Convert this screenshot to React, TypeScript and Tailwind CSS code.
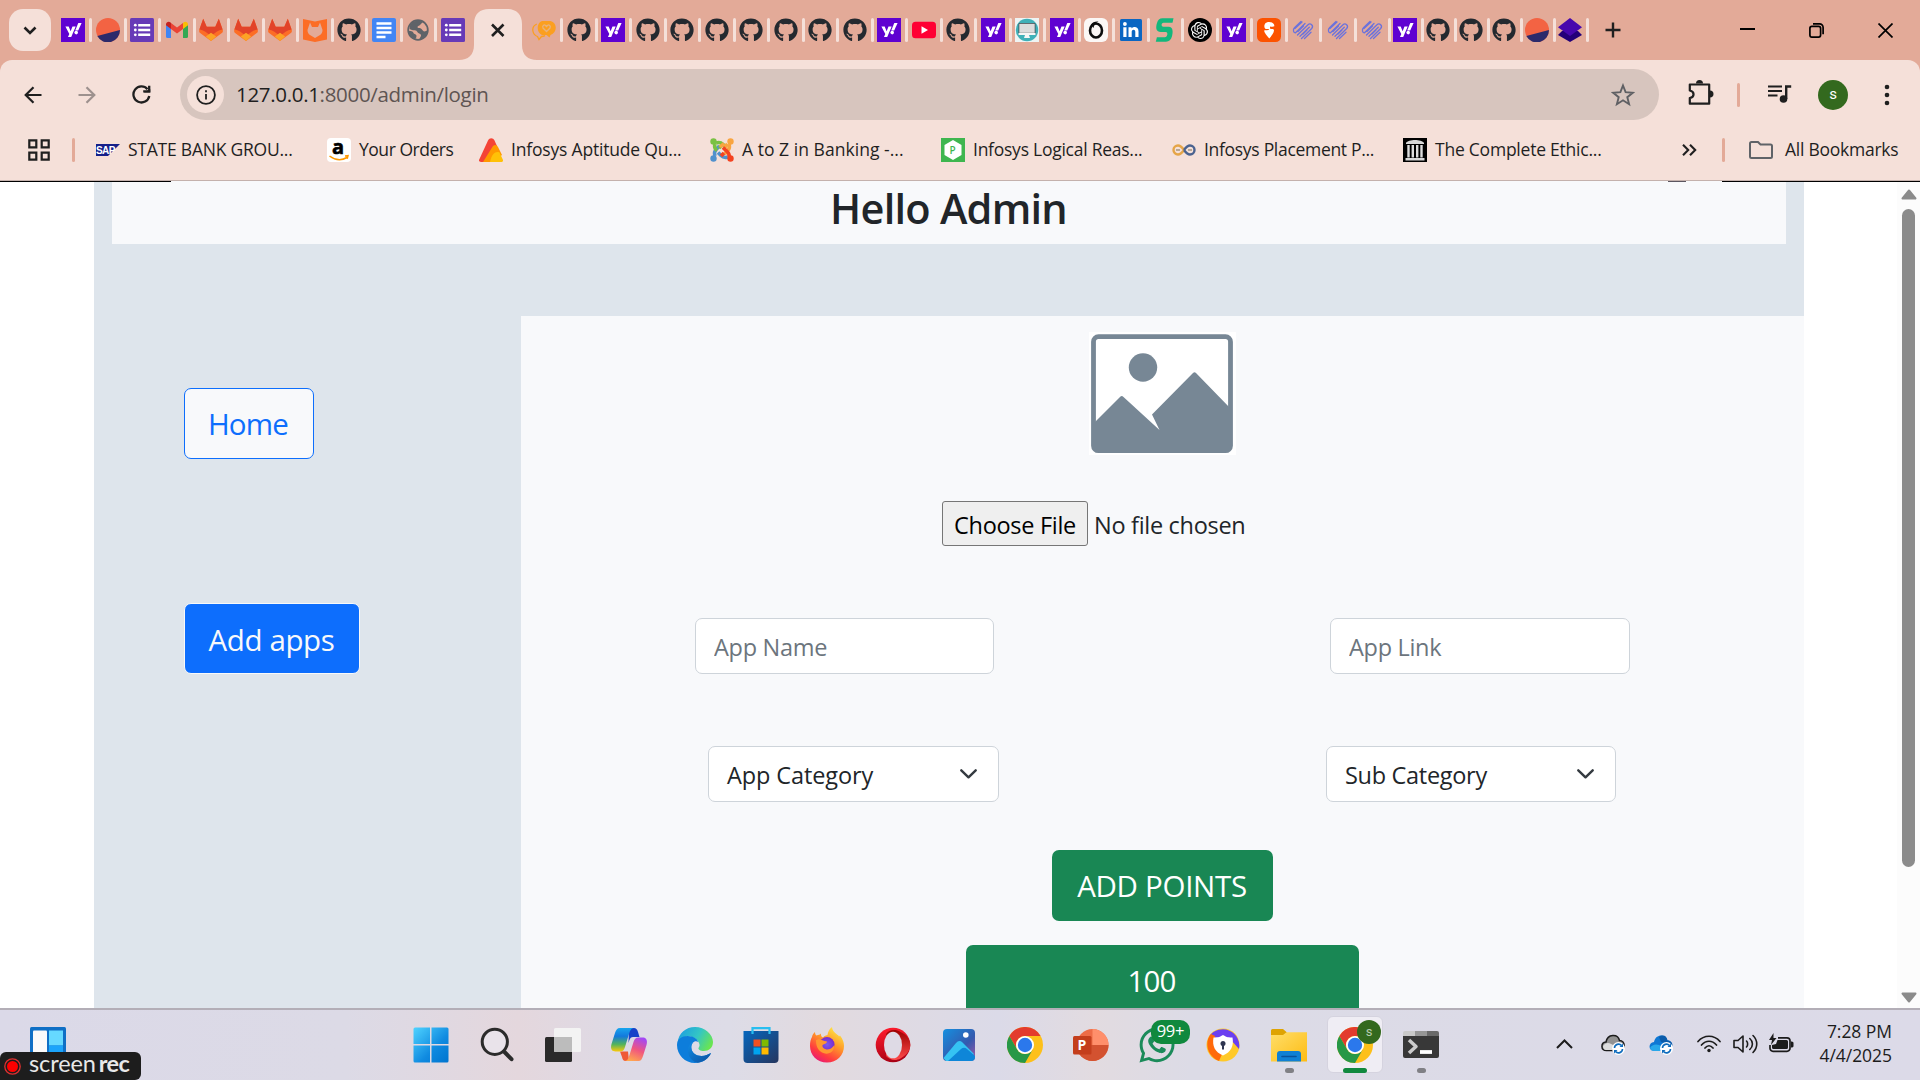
import type { ReactNode } from 'react'
import { FaGithub, FaWhatsapp } from 'react-icons/fa'
import { SiOpenai } from 'react-icons/si'

type P = { children: ReactNode; s?: number; vb?: string }
const Svg = ({ children, s = 24, vb = '0 0 24 24' }: P) => (
  <svg width={s} height={s} viewBox={vb} fill="none" className="block shrink-0">{children}</svg>
)

/* ---------- favicons ---------- */
const Yahoo = () => (
  <Svg>
    <rect width="24" height="24" fill="#5f01d1" />
    <path d="M4.400 8.500h3.300l1.900 4.700L11.500 8.500h3.200L10.200 19H7l1.300-3z" fill="#fff" />
    <path d="M17.300 5h3.300l-3.400 7.500h-3z" fill="#fff" />
    <circle cx="15.200" cy="14.600" r="1.800" fill="#fff" />
  </Svg>
)
const Github = () => <FaGithub size={24} color="#24292f" className="block shrink-0" />
const Sunset = () => (
  <Svg>
    <circle cx="12" cy="12" r="12" fill="#f36343" />
    <path d="M1.300 18 23.900 12A12 12 0 0 1 1.300 18z" fill="#2c2a6b" />
  </Svg>
)
const Forms = () => (
  <Svg>
    <rect width="24" height="24" rx="1.500" fill="#673ab7" />
    <g fill="#fff">
      <path d="M8.200 6h12v2.500h-12zM8.200 10.800h12v2.500h-12zM8.200 15.500h12V18h-12z" />
      <circle cx="5.300" cy="7.200" r="1.400" /><circle cx="5.300" cy="12" r="1.400" /><circle cx="5.300" cy="16.800" r="1.400" />
    </g>
  </Svg>
)
const Gmail = () => (
  <Svg>
    <path d="M1 6v12.500A1.500 1.500 0 0 0 2.500 20H6v-9.500z" fill="#4285f4" />
    <path d="M23 6v12.500a1.500 1.500 0 0 1-1.500 1.500H18v-9.500z" fill="#34a853" />
    <path d="M18 5.500v5.500l5-3.700V6.500c0-2.300-2.600-3.500-4.300-2.200z" fill="#fbbc04" />
    <path d="M6 11V5l6 4.500L18 5v6l-6 4.600z" fill="#ea4335" />
    <path d="M1 6.500v.8L6 11V5l-.7-.7C3.600 3 1 4.200 1 6.500z" fill="#c5221f" />
  </Svg>
)
const Gitlab = () => (
  <Svg>
    <path d="M12 23 4.500 17.500.8 14.700C-.1 14 .1 12.600.4 11.500L4.200.8l3.500 8h8.600l3.500-8 3.800 10.700c.4 1.200.5 2.500-.4 3.200L19.500 17.500z" fill="#fc6d26" />
    <path d="M4.200.8.4 11.500c0 .3 3.600.3 6 2.300L12 18l5.600-4.200c2.400-2 6-2 6-2.300L19.800.8l-3.500 8H7.700z" fill="#e24329" />
    <path d="M6.800 18.500 12 14.800l5.200 3.700L12 23z" fill="#fca326" />
  </Svg>
)
const Shield = () => (
  <Svg>
    <path d="M0 1 12 3.500 24 1v20.500L12 24 0 21.500z" fill="#fc6d26" />
    <path d="M7 4.500 9 9h6l2-4.500L19.500 12c0 2.500-1 4-2.500 5l-5 3-5-3c-1.500-1-2.500-2.500-2.500-5z" fill="#e3aa98" />
  </Svg>
)
const Docs = () => (
  <Svg>
    <rect width="24" height="24" rx="2" fill="#4285f4" />
    <path d="M4.500 4.200h15v2.500h-15zM4.500 8.800h15v2.500h-15zM4.500 13.200h15v2.500h-15zM4.500 17.800h9v2.500h-9z" fill="#fff" />
  </Svg>
)
const Globe = () => (
  <Svg>
    <circle cx="12" cy="12" r="9.800" stroke="#5f6368" strokeWidth="1.800" />
    <path d="M3 13c3 0 4 .5 4.500 2s3 1 3 3-1 3-2 3.500C5 20 2.500 17 3 13zM8 3.500C11 2 15 2 17 3.500c-.5 2-2 1.500-2.500 3s-3 1-3 2.500 2.500.500 4 2 1.500 2.500 3 2.500 2-1 3-.5c-.5 4-4 8-8 8.500 0-2 2-3 1.500-4.500s-3-1.500-4-3.500-3-1-5-1.500-2.500-1-2.500-2C3.500 7 5 5 8 3.500z" fill="#5f6368" />
  </Svg>
)
const Chat = () => (
  <Svg>
    <path d="M4.800 6C1.500 7.500.4 10 .9 13s2 4.500 4.600 5.500l1.500 3 2.500-3c1.500 0 2.500-.3 3.500-.8" stroke="#fb9f20" strokeWidth="1.300" />
    <path d="M10 3h8.500c7 1.500 7 12 0 14l-1 2.500-3-2.500H10C4.500 15 4 5 10 3z" fill="#fb9f20" />
    <path d="M14.500 13.500 11 10c-1-2 1-4 2.500-2.500l1 1 1-1C17 6 19 8 18 10z" stroke="#e9b27b" strokeWidth="1.300" />
  </Svg>
)
const Youtube = () => (
  <Svg><rect y="3.700" width="24" height="16.500" rx="3.500" fill="#f03" /><path d="m9.500 8.300 6.500 3.700-6.500 3.700z" fill="#fff" /></Svg>
)
const Monitor = () => (
  <Svg>
    <rect width="24" height="24" fill="#eef3f3" /><circle cx="12" cy="12" r="11.200" fill="#3fb0b8" />
    <rect x="3.500" y="5" width="17" height="12" rx="1" fill="#444f54" /><rect x="4.300" y="5.800" width="15.400" height="9" fill="#dcdcdc" />
    <path d="M3.500 15h17v2h-17zM10 17h4l1 3H9z" fill="#f6f6f6" />
  </Svg>
)
const Ring = () => (
  <Svg>
    <rect width="24" height="24" rx="6" fill="#fbf7f5" />
    <ellipse cx="12" cy="12.500" rx="6" ry="7" stroke="#0d0d0d" strokeWidth="2.600" />
    <path d="M7 6.500C8.500 4 11 3.200 14.500 3.500 11 5 10 7 9.500 10z" fill="#0d0d0d" />
  </Svg>
)
const Linkedin = () => (
  <Svg>
    <rect x="1" y="1" width="22" height="22" rx="1.500" fill="#0a66c2" />
    <path d="M4.300 9.300h3.200V19H4.300zM9.500 9.300h3v1.300c1.700-2.400 7-2.200 7 2.600V19h-3.200v-5.200c0-3-3.600-2.600-3.600 0V19H9.500z" fill="#fff" />
    <circle cx="5.900" cy="6" r="1.900" fill="#fff" />
  </Svg>
)
const GreenS = () => (
  <Svg>
    <path d="M20.500.3 19.500 4.800h-9c-2.500 0-2.500 4 0 4h5c5 0 4.500 6 3.500 9.500-.8 3.500-3 5.400-6 5.400H2.800l1.100-4.500h8c2.600 0 3.600-5.200.8-5.200H8c-6 0-5-6-4-9C4.800 2 6.500.3 9.500.3z" fill="#13b77c" />
  </Svg>
)
const Openai = () => (
  <span className="flex size-6 shrink-0 items-center justify-center rounded-full bg-black"><SiOpenai size={17} color="#fff" /></span>
)
const Swiggy = () => (
  <Svg>
    <rect width="24" height="24" rx="5.500" fill="#fc5200" />
    <path d="M12.300 20.500C10 18 7.500 15 7 12.500c1.500-.6 4.500 0 5-.7s-1-.8-3-.8C6.500 10.500 6.300 4 12 4c4 0 5.600 2.500 5.300 4.300-1 .7-3 .4-4.300.2v2.300c2.500.2 4 .2 4 1.700-.3 3-3 6-4.700 8z" fill="#fff" />
  </Svg>
)
const Hands = () => (
  <Svg>
    <g stroke="#6b72dc" strokeWidth="1.300" strokeLinecap="round">
      <path d="M10 3.500 3.500 9.800c-2 2-1 5 1 5L14 5.500M6.500 17 17 6.800c2.500-2.300 6 1 3.700 3.700L10.500 20.500M9 18.200l9.300-9M13.500 20.500l6.500-6.300M4 10.500l7-6.500M7 13.500 12.500 8M12 16l4-4" />
    </g>
  </Svg>
)
const Layers = () => (
  <Svg><path d="M0 17l4-4h16l4 4-12 7z" fill="#230078" /><path d="M12 0 24 9.200 12 18 0 9.200z" fill="#4607ad" /></Svg>
)

const Tab = ({ icon, last, w = 'w-[34.5px]' }: { icon: ReactNode; last?: boolean; w?: string }) => (
  <div className={`flex shrink-0 items-center gap-1 ${w}`}>{icon}{!last && <span className="h-6 w-[3px] shrink-0 rounded-sm bg-[#f5e0d9]" />}</div>
)

const leftTabs = [Yahoo, Sunset, Forms, Gmail, Gitlab, Gitlab, Gitlab, Shield, Github, Docs, Globe, Forms]
const midTabs = [Chat, Github, Yahoo, Github, Github, Github, Github, Github, Github, Github, Yahoo, Youtube, Github, Yahoo, Monitor, Yahoo, Ring, Linkedin, GreenS, Openai, Yahoo, Swiggy, Hands, Hands, Hands]
const rightTabs = [Yahoo, Github, Github, Github, Sunset, Layers]

function TabStrip() {
  return (
    <div className="flex h-[60px] items-center bg-[#e3aa98]">
      <button className="ml-[9px] flex size-[42px] shrink-0 items-center justify-center rounded-[14px] bg-[#f5e0d9]">
        <svg width="14" height="9" viewBox="0 0 14 9" fill="none" stroke="#1f1f1f" strokeWidth="2.600"><path d="m1.500 1.500 5.500 5.500 5.500-5.500" /></svg>
      </button>
      <div className="ml-[10px] flex w-[398px]">{leftTabs.map((I, i) => <Tab key={i} icon={<I />} last={i === 11} />)}</div>
      <div className="mt-[9px] flex h-[51px] w-[78px] shrink-0 items-end">
        <svg width="78" height="51" viewBox="0 0 78 51" fill="#f5e0d9"><path d="M0 51c9 0 15-5 15-15V15C15 5 21 0 30 0h18c9 0 15 5 15 15v21c0 10 6 15 15 15z" /><path d="m33 15.500 11.500 11.500m0-11.500L33 27" stroke="#1f1f1f" strokeWidth="2.600" /></svg>
      </div>
      <div className="-ml-[5px] flex">{midTabs.map((I, i) => <Tab key={i} icon={<I />} />)}</div>
      <div className="-ml-[2px] flex">{rightTabs.map((I, i) => <Tab key={i} icon={<I />} w="w-[33px]" />)}</div>
      <svg width="16" height="16" viewBox="0 0 16 16" stroke="#1f1f1f" strokeWidth="2.400" className="ml-[14px]"><path d="M8 .5v15M.5 8h15" /></svg>
      <div className="mr-[27px] ml-auto flex items-center gap-[54px]">
        <svg width="15" height="2" className="mb-0.5"><path d="M0 1h15" stroke="#000" strokeWidth="2" /></svg>
        <svg width="15" height="15" viewBox="0 0 15 15" fill="none" stroke="#000" strokeWidth="1.700"><rect x=".9" y="3.400" width="10.700" height="10.700" rx="2" /><path d="M4 .9h6.500a3.500 3.500 0 0 1 3.600 3.500v6.800" /></svg>
        <svg width="15" height="15" viewBox="0 0 15 15" stroke="#000" strokeWidth="1.700"><path d="m.5.5 14 14m0-14L.5 14.500" /></svg>
      </div>
    </div>
  )
}

function Toolbar() {
  return (
    <div className="bg-[#e3aa98]">
      <div className="flex h-[69px] items-center rounded-t-[12px] bg-[#f5e0d9]">
        <svg width="18" height="18" viewBox="0 0 18 18" fill="none" stroke="#1f1f1f" strokeWidth="2.200" className="ml-[24px]"><path d="M17.500 9H2M9.500 1.200 1.700 9l7.800 7.800" /></svg>
        <svg width="18" height="18" viewBox="0 0 18 18" fill="none" stroke="#9d918e" strokeWidth="2.200" className="ml-[36px]"><path d="M.5 9H16M8.500 1.200 16.300 9l-7.800 7.800" /></svg>
        <svg width="19" height="19" viewBox="0 0 19 19" fill="none" stroke="#1f1f1f" strokeWidth="2.300" className="ml-[36px]"><path d="M17.300 11A8 8 0 1 1 15.500 4.200" /><path d="M18.300.8v6.700h-6.700L18.300 4z" fill="#1f1f1f" stroke="none" /><path d="M17.200.8v5.600h-6" /></svg>
        <div className="ml-[29px] flex h-[51px] w-[1479px] shrink-0 items-center rounded-full bg-[#d7c5be] pl-[7px]">
          <span className="flex size-[37px] items-center justify-center rounded-full bg-[#f5e0d9]">
            <svg width="20" height="20" viewBox="0 0 20 20" fill="none" stroke="#1f1f1f" strokeWidth="1.800"><circle cx="10" cy="10" r="8.900" /><path d="M10 9v5.500M10 5.300v2" /></svg>
          </span>
          <span className="ml-[12px] text-[20.500px] tracking-[-0.320px] whitespace-nowrap text-[#5e5452]"><span className="text-[#1f1f1f]">127.0.0.1</span>:8000/admin/login</span>
          <svg width="24" height="24" viewBox="0 0 24 24" fill="none" stroke="#5f6064" strokeWidth="1.900" className="mr-[24px] ml-auto"><path d="m12 2.500 2.600 6.700 7.200.5-5.500 4.500 1.800 7L12 17.300 5.900 21.200l1.800-7L2.200 9.700l7.200-.5z" /></svg>
        </div>
        <svg width="26" height="26" viewBox="0 0 26 26" fill="none" className="-mt-[3px] ml-[29px]"><path d="M1.800 4.500h19.400v19.200H1.800V18c5-1 5-6.500 0-7.500z" stroke="#1f1f1f" strokeWidth="2.200" strokeLinejoin="round" /><path d="M8 3.500a3.500 3.500 0 0 1 7 0zM22 10.500a3.500 3.500 0 0 1 0 7z" fill="#1f1f1f" /></svg>
        <span className="ml-[23px] h-6 w-[3px] rounded-sm bg-[#e3aa98]" />
        <svg width="24" height="19" viewBox="0 0 24 19" className="ml-[28px]"><path d="M0 1.500h14M0 6h14M0 10.500h9.500" stroke="#1f1f1f" strokeWidth="2.200" /><circle cx="15.500" cy="14" r="3.800" fill="#1f1f1f" /><path d="M18.200 14V1.500h5" stroke="#1f1f1f" strokeWidth="2.400" fill="none" /></svg>
        <span className="ml-[26px] flex size-[30px] items-center justify-center rounded-full bg-[#33691e] font-[Roboto] text-[15px] text-white">s</span>
        <svg width="6" height="22" viewBox="0 0 6 22" fill="#1f1f1f" className="ml-[36px]"><circle cx="3" cy="3" r="2.300" /><circle cx="3" cy="11" r="2.300" /><circle cx="3" cy="19" r="2.300" /></svg>
      </div>
    </div>
  )
}

const Sap = () => (
  <svg width="24" height="24" viewBox="0 0 24 24"><path d="M0 6h24L12 18H0z" fill="#15208a" /><text x="0" y="15.500" fontSize="10" fontWeight="800" fill="#fff" letterSpacing="-.6" fontFamily="Liberation Sans">SAP</text></svg>
)
const Amazon = () => (
  <svg width="24" height="24" viewBox="0 0 24 24" className="overflow-visible"><rect width="24" height="24" rx="4" fill="#fff" /><text x="5" y="16" fontSize="20" fontWeight="700" fill="#000" stroke="#000" strokeWidth=".6" fontFamily="Open Sans">a</text><path d="M2.500 18c6 4.500 12.500 4.500 17.500 1.500M18 18l3-.3-.8 3" stroke="#f90" strokeWidth="1.500" fill="none" /></svg>
)
const Cone = () => (
  <svg width="24" height="24" viewBox="0 0 24 24"><path d="M0 22 9 2.500C10.500-.5 14-.5 15.500 2.500L18 8 6 24H2C.5 24-.3 23 0 22z" fill="#f44336" /><path d="M4 24 14 8c2-2 4-1 5 1l4 8-9 7z" fill="#ff9800" /><path d="M11 24c2-9 6-11 9.500-9.500L24 22c.2 1-.5 2-2 2z" fill="#ffc107" /></svg>
)
const Joomla = () => (
  <svg width="24" height="24" viewBox="0 0 24 24" fill="none" strokeWidth="3.600">
    <path d="M5 18c-1-3-.5-5 1.500-7l3-3" stroke="#5091cd" /><path d="M6 5c3-1 5-.5 7 1.500l3 3" stroke="#7ac143" />
    <path d="M19 6c1 3 .5 5-1.500 7l-3 3" stroke="#f9a541" /><path d="M18 19c-3 1-5 .5-7-1.500l-3-3" stroke="#5091cd" />
    <path d="M5 6c-1 3 0 5 2 6.500M9 10l5-4.500" stroke="#7ac143" /><path d="M14.500 9.500l3-3.500M10 9l4-3.500" stroke="#f9a541" />
    <path d="M13 9.500l4.500 4.500c2 2 2 3 1.500 5M14 15l-3 3" stroke="#f44321" />
    <circle cx="3.500" cy="3.500" r="3.200" fill="#7ac143" /><circle cx="20.500" cy="3.500" r="3.200" fill="#f9a541" /><circle cx="3.500" cy="20.500" r="3.200" fill="#5091cd" /><circle cx="20.500" cy="20.500" r="3.200" fill="#f44321" />
  </svg>
)
const PHex = () => (
  <svg width="24" height="24" viewBox="0 0 24 24"><rect width="24" height="24" fill="#3eb64f" /><path d="M12 2l8.500 5v10L12 22l-8.500-5V7z" fill="#fff" /><text x="8.500" y="15.500" fontSize="10" fill="#3eb64f" fontWeight="600" fontFamily="Open Sans">P</text></svg>
)
const Infinity = () => (
  <svg width="24" height="24" viewBox="0 0 24 24" fill="none" strokeWidth="2.400"><path d="M12 12c-2.500 3.500-4 4.500-6 4.500a4.500 4.500 0 0 1 0-9c2 0 3.500 1 6 4.500" stroke="#e5a547" /><path d="M12 12c2.500-3.500 4-4.500 6-4.500a4.500 4.500 0 0 1 0 9c-2 0-3.500-1-6-4.500" stroke="#4a628f" /><path d="M4 12h4M16 12h4" stroke="#a3957f" strokeWidth="1.500" /></svg>
)
const Museum = () => (
  <svg width="24" height="24" viewBox="0 0 24 24"><rect width="24" height="24" fill="#000" /><path d="M3 5c2-4 16-4 18 0v1H3zM2.500 20h19v2.500h-19z" fill="#d8d8d8" /><path d="M5.500 7v12.500M9.800 7v12.500M14.200 7v12.500M18.500 7v12.500" stroke="#ddd" strokeWidth="2.400" /></svg>
)
const bookmarks: [() => ReactNode, string, string, string][] = [
  [Sap, 'STATE BANK GROU...', 'w-[231px]', 'tracking-[-0.230px]'],
  [Amazon, 'Your Orders', 'w-[152px]', 'tracking-[-0.470px]'],
  [Cone, 'Infosys Aptitude Qu...', 'w-[231px]', 'tracking-[-0.190px]'],
  [Joomla, 'A to Z in Banking -...', 'w-[231px]', 'tracking-[0.040px]'],
  [PHex, 'Infosys Logical Reas...', 'w-[231px]', 'tracking-[-0.250px]'],
  [Infinity, 'Infosys Placement P...', 'w-[231px]', 'tracking-[-0.300px]'],
  [Museum, 'The Complete Ethic...', 'w-[231px]', 'tracking-[-0.230px]'],
]

function Bookmarks() {
  return (
    <div className="flex h-[52px] items-center border-b border-[#c4b1ac] bg-[#f5e0d9] pb-[9px] text-[17.500px] text-[#1f1f1f]">
      <svg width="22" height="22" viewBox="0 0 22 22" fill="none" stroke="#1f1f1f" strokeWidth="2.200" className="ml-[28px] shrink-0"><path d="M1.300 1.300h7v7h-7zM13.700 1.300h7v7h-7zM1.300 13.700h7v7h-7zM13.700 13.700h7v7h-7z" /></svg>
      <span className="ml-[22px] h-6 w-[3px] shrink-0 rounded-sm bg-[#e3aa98]" />
      <div className="ml-[21px] flex">
        {bookmarks.map(([I, t, w, tr]) => (
          <div key={t} className={`flex shrink-0 items-center gap-[8px] ${w}`}><I /><span className={`pb-0.5 whitespace-nowrap ${tr}`}>{t}</span></div>
        ))}
      </div>
      <svg width="15" height="12" viewBox="0 0 15 12" fill="none" stroke="#1f1f1f" strokeWidth="2.100" className="ml-[48px]"><path d="m1 .8 5.200 5.200L1 11.200M8 .8 13.200 6 8 11.200" /></svg>
      <span className="ml-[25px] h-6 w-[3px] rounded-sm bg-[#e3aa98]" />
      <svg width="24" height="18" viewBox="0 0 24 18" fill="none" stroke="#5f6368" strokeWidth="2" className="ml-[24px]"><path d="M1 2.500A1.500 1.500 0 0 1 2.500 1H9l2.500 2.500h10A1.500 1.500 0 0 1 23 5v10.500a1.500 1.500 0 0 1-1.500 1.500h-19A1.500 1.500 0 0 1 1 15.500z" /></svg>
      <span className="ml-[12px] pb-0.5 tracking-[-0.250px] whitespace-nowrap">All Bookmarks</span>
    </div>
  )
}

const Select = ({ label, cls }: { label: string; cls: string }) => (
  <div className={`flex h-[56px] items-center justify-between rounded-[7px] border border-[#ced4da] bg-white pt-px pr-[21px] pl-[18px] text-[#212529] ${cls}`}>
    <span className="pt-[3px] whitespace-nowrap">{label}</span>
    <svg width="17" height="10" viewBox="0 0 17 10" fill="none" stroke="#343a40" strokeWidth="2.400" strokeLinecap="round" strokeLinejoin="round" className="-mt-0.5"><path d="m1.300 1.300 7.200 7 7.200-7" /></svg>
  </div>
)

function Page() {
  return (
    <div className="relative flex h-[827px] overflow-hidden bg-white">
      <div className="ml-[94px] flex w-[1710px] shrink-0 flex-col bg-[#dee5ec]">
        <div className="mr-[18px] ml-[18px] flex h-[63px] shrink-0 justify-center bg-[#f8f9fb] pr-px text-[41.500px] leading-[55px] font-semibold tracking-[-0.750px] text-[#212529]">Hello Admin</div>
        <div className="mt-[72px] flex min-h-0 flex-1">
          <div className="flex w-[427px] shrink-0 flex-col items-start pt-[72px] pl-[90px] text-[29.500px]">
            <button className="h-[71px] w-[130px] rounded-[7px] border border-[#0d6efd] bg-[#f8f9fb] pt-0.5 pr-0.5 tracking-[-0.800px] text-[#0d6efd]">Home</button>
            <button className="mt-[144px] h-[71px] w-[176px] rounded-[7px] border border-[#f8f9fa] bg-[#0d6efd] pt-[3px] pr-px tracking-[-0.400px] whitespace-nowrap text-[#f8f9fa]">Add apps</button>
          </div>
          <div className="flex min-w-0 flex-1 flex-col items-center overflow-hidden bg-[#f8f9fb] pt-4 text-[23.500px] tracking-[-0.300px]">
            <svg width="147" height="123" viewBox="0 0 147 123" className="shrink-0">
              <rect width="147" height="123" fill="#fff" />
              <rect x="4.500" y="4.700" width="137" height="114" rx="5" fill="none" stroke="#778795" strokeWidth="4.800" />
              <path d="M6 90 31.500 64.500Q33 63.500 34.500 65L70.500 98 63 82.500 104 41Q105.500 39.500 107 41L141 76v42H6z" fill="#778795" />
              <circle cx="54" cy="35.500" r="14.200" fill="#778795" />
            </svg>
            <div className="mt-[46px] mr-[135px] flex h-[45px] w-[306px] shrink-0 items-center gap-[6px] whitespace-nowrap">
              <button className="h-[45px] w-[146px] shrink-0 rounded-[3px] border border-[#767676] bg-[#efefef] pt-1 text-black">Choose File</button>
              <span className="pt-1 text-[#212529]">No file chosen</span>
            </div>
            <div className="mt-[72px] flex h-[56px] w-full shrink-0 justify-between pr-[174px] pl-[174px]">
              <input placeholder="App Name" className="h-[56px] w-[299px] rounded-[7px] border border-[#ced4da] bg-white pt-[2px] pl-[18px] tracking-[-0.300px] placeholder:text-[#6c757d]" />
              <input placeholder="App Link" className="h-[56px] w-[300px] rounded-[7px] border border-[#ced4da] bg-white pt-[2px] pl-[18px] tracking-[-0.300px] placeholder:text-[#6c757d]" />
            </div>
            <div className="mt-[72px] flex h-[56px] w-full shrink-0 justify-between pr-[188px] pl-[187px]">
              <Select label="App Category" cls="w-[291px] tracking-[-0.100px]" />
              <Select label="Sub Category" cls="w-[290px]" />
            </div>
            <button className="mt-[48px] h-[71px] w-[221px] shrink-0 rounded-[7px] bg-[#198754] pt-0.5 pr-px text-[29.500px] whitespace-nowrap text-white">ADD POINTS</button>
            <button className="mt-[24px] h-[71px] w-[393px] shrink-0 rounded-[7px] bg-[#198754] pt-0.5 pr-[22px] text-[29.500px] tracking-[-0.900px] text-white">100</button>
          </div>
        </div>
      </div>
      <div className="ml-auto flex w-[23px] flex-col items-center bg-[#fcfcfc]">
        <svg width="16" height="11" viewBox="0 0 16 11" className="mt-[8px]"><path d="M8 1.500 14.500 9.500H1.500z" fill="#8b8b8b" stroke="#8b8b8b" strokeWidth="2" strokeLinejoin="round" /></svg>
        <span className="mt-[9px] h-[658px] w-[13px] rounded-full bg-[#8b8b8b]" />
        <svg width="16" height="11" viewBox="0 0 16 11" className="mt-auto mb-[5px]"><path d="M1.500 1.500h13L8 9.500z" fill="#8b8b8b" stroke="#8b8b8b" strokeWidth="2" strokeLinejoin="round" /></svg>
      </div>
      {/* slivers of the window behind */}
      <span className="absolute top-0 left-0 h-px w-[171px] bg-black" />
      <span className="absolute top-0 left-[1668px] h-px w-[18px] bg-[#5b5660]" />
      <span className="absolute top-0 right-0 h-px w-[198px] bg-black" />
    </div>
  )
}

/* ---------- taskbar ---------- */
const Start = () => (
  <svg width="36" height="36" viewBox="0 0 36 36"><defs><linearGradient id="win" x1="0" y1="0" x2="1" y2="1"><stop stopColor="#4fd3ff" /><stop offset=".6" stopColor="#0f8ae0" /><stop offset="1" stopColor="#0074cf" /></linearGradient></defs>
    <path d="M2 .5h15v16.500H.5V2A1.500 1.500 0 0 1 2 .5zM18.500.5H34A1.500 1.500 0 0 1 35.500 2v15h-17zM.5 18.500H17v17H2A1.500 1.500 0 0 1 .5 34zM18.500 18.500h17V34a1.500 1.500 0 0 1-1.500 1.500H18.500z" fill="url(#win)" /></svg>
)
const SearchI = () => (
  <svg width="36" height="36" viewBox="0 0 36 36" fill="none" stroke="#2b2b2b"><circle cx="15.800" cy="14.800" r="12.600" fill="#e9e3ea" strokeWidth="3" /><path d="m25.500 25 7 7.200" strokeWidth="4" strokeLinecap="round" /></svg>
)
const TaskView = () => (
  <svg width="36" height="36" viewBox="0 0 36 36"><rect y="10" width="27" height="25" rx="1.500" fill="#2a2a2a" /><rect x="9" y="1" width="27" height="24" rx="1.500" fill="#f3f3f3" /><path d="M9 10h18v15H10.500A1.500 1.500 0 0 1 9 23.500z" fill="#bcbcbc" /></svg>
)
const Copilot = () => (
  <svg width="36" height="36" viewBox="0 0 36 36"><defs>
    <linearGradient id="ca" x1="0" y1="0" x2="0" y2="1"><stop stopColor="#18a5ee" /><stop offset=".35" stopColor="#1279dd" /><stop offset=".7" stopColor="#55b45b" /><stop offset="1" stopColor="#fbc90a" /></linearGradient>
    <linearGradient id="cb" x1=".7" y1="0" x2=".3" y2="1"><stop stopColor="#a348f5" /><stop offset=".5" stopColor="#f0567f" /><stop offset="1" stopColor="#ffa84f" /></linearGradient></defs>
    <path d="M18 1h5c2 0 3 1 4 4l1.500 5H22c-3 0-3.500 3-4.500 6z" fill="#1742c8" /><path d="M18 34h-3.500c-2 0-3-1.500-3.500-4l-2-5.500h8z" fill="#ef5a36" />
    <path d="M9 1h14c-3 0-4 3-5 6l-4 13c-1 3-2 4.500-5 4.500H4.500C0 24.500-.5 21 .5 17L4 6c1-3 2-5 5-5z" fill="url(#ca)" />
    <path d="M27.500 34h-14c3 0 4-3 5-6l4-13c1-3 2-4.500 5-4.500H31.500c4.500 0 5 3.500 4 7.500L32 29c-1 3-2 5-4.500 5z" fill="url(#cb)" /></svg>
)
const Edge = () => (
  <svg width="36" height="36" viewBox="0 0 36 36"><defs><linearGradient id="ea" x1="0" y1=".2" x2="1" y2=".6"><stop stopColor="#1b9de2" /><stop offset=".55" stopColor="#34c6c4" /><stop offset="1" stopColor="#6ae551" /></linearGradient><linearGradient id="eb" x1="0" y1="0" x2="1" y2="1"><stop stopColor="#0f8be6" /><stop offset="1" stopColor="#0c4f9e" /></linearGradient></defs>
    <path d="M.5 16C1.500 6 9 0 18 0c10 0 18 7.500 18 15 0 6-4.500 9-9 9-4 0-6-1.500-5.500-3 1-1.500 1.500-3 .5-5C20 11 14 8.500 8.500 10 4 11.200 1.500 14 .5 16z" fill="url(#ea)" />
    <path d="M0 18c0-6 5-9 10.500-9 6 0 10 3 10.800 6-3-2-7 0-7 5.500 0 5 5 8.500 10.200 8.500 4 0 6.500-1.500 9.500-3-2.500 6-8.500 10-16 10C8 36 0 28 0 18z" fill="#0d7ddb" />
    <path d="M14.300 15.500c-3 3-4 7-3 11 1.300 5 5 8.500 9.500 9.300 6-1 11-4.500 13.200-9.800-3 1.500-5.500 3-9.500 3-5.200 0-10.200-3.500-10.200-8.500 0-2 .5-4 2-5z" fill="url(#eb)" /></svg>
)
const Store = () => (
  <svg width="36" height="36" viewBox="0 0 36 36"><defs><linearGradient id="st" x1="0" y1="0" x2="1" y2="1"><stop stopColor="#0566bd" /><stop offset="1" stopColor="#26365f" /></linearGradient></defs><path d="M.5 4h35v28a4 4 0 0 1-4 4h-27a4 4 0 0 1-4-4z" fill="url(#st)" /><path d="M9.500 7V1.200h17V7" stroke="#28bef0" strokeWidth="2.200" fill="none" /><path d="M10.500 12.500h7v7h-7z" fill="#f25022" /><path d="M18.500 12.500h7v7h-7z" fill="#7fba00" /><path d="M10.500 20.500h7v7h-7z" fill="#00a4ef" /><path d="M18.500 20.500h7v7h-7z" fill="#ffb900" /></svg>
)
const Firefox = () => (
  <svg width="36" height="36" viewBox="0 0 36 36"><defs><linearGradient id="ff" x1=".8" y1="0" x2=".2" y2="1"><stop stopColor="#fff04a" /><stop offset=".4" stopColor="#ff9a28" /><stop offset=".75" stopColor="#ff3b3f" /><stop offset="1" stopColor="#e5157e" /></linearGradient><radialGradient id="fp"><stop stopColor="#7a5cf0" /><stop offset="1" stopColor="#7a2bc9" /></radialGradient></defs>
    <path d="M3 10c.3-2 1.500-4 3-5 0 2 .7 3 1.500 3.500C9.500 8 11 7.500 12 6.500c0 2 0 3 2 4 1-1 2-2 4.500-2.500C19 5 20 2 23 0c0 3 2 5 5 7.500 1 .5 1.500 1 2 2l1-1c3 4 4 7 4 10.500C35 28 28 35.500 18 35.500S1 28 1 19c0-4 .7-7 2-9z" fill="url(#ff)" /><circle cx="18" cy="17.500" r="7.500" fill="url(#fp)" /><path d="M7 13c4-2 6 1 11 1.500 0 2-3 2.500-4.500 3.500-.5 2 1 4 4 4.500 3 .2 6-1.500 7.500-4 1 7-7 10-12 7S7 18 7 13z" fill="#ff9830" /></svg>
)
const Opera = () => (
  <svg width="36" height="36" viewBox="0 0 36 36"><defs><linearGradient id="op" x1=".3" y1="0" x2=".5" y2="1"><stop stopColor="#ff1b2d" /><stop offset="1" stopColor="#a70014" /></linearGradient><linearGradient id="oq" x1="0" y1="0" x2="0" y2="1"><stop stopColor="#9c0000" /><stop offset="1" stopColor="#ff4b4b" /></linearGradient></defs><ellipse cx="18" cy="18" rx="17.300" ry="17.300" fill="url(#op)" /><path d="M11 7c3-4 9-5.500 14.500-2C32 8 35.300 13 35.300 18S32 28 25.500 31.500C20 34.500 14 32.500 11 29z" fill="url(#oq)" /><ellipse cx="18" cy="18" rx="9" ry="13.300" fill="#dedae5" /></svg>
)
const Photos = () => (
  <svg width="36" height="36" viewBox="0 0 36 36"><defs><linearGradient id="ph" x1="0" y1="0" x2="1" y2="1"><stop stopColor="#1590e0" /><stop offset=".6" stopColor="#3459ae" /><stop offset="1" stopColor="#a359a8" /></linearGradient></defs><rect x="2" y="2" width="32" height="32" rx="4" fill="url(#ph)" /><path d="M2.500 31 15 16q3-3.500 6.500-.5l11 11V31a3 3 0 0 1-3 3H5z" fill="#35c3f3" /><path d="M7 34l13-12q3-2.500 6 0l8 7v1a4 4 0 0 1-4 4z" fill="#0e86d8" /><circle cx="24.800" cy="8" r="2.800" fill="#fff" /></svg>
)
const Chrome = () => (
  <svg width="36" height="36" viewBox="0 0 36 36"><circle cx="18" cy="18" r="18" fill="#fdc01a" /><path d="M2.400 9A18 18 0 0 1 33.600 9H18a9 9 0 0 0-7.800 13.500z" fill="#e33b2e" /><path d="M2.400 9A18 18 0 0 0 18 36l7.800-13.500A9 9 0 0 1 10.200 22.500z" fill="#279847" /><circle cx="18" cy="18" r="9" fill="#fff" /><circle cx="18" cy="18" r="7.200" fill="#2b78ec" /></svg>
)
const Ppt = () => (
  <svg width="36" height="36" viewBox="0 0 36 36"><circle cx="19.500" cy="18" r="16" fill="#ed6c47" /><path d="M19.500 2a16 16 0 0 1 16 16h-16z" fill="#ff8f6b" /><path d="M3.500 18h32a16 16 0 0 1-32 0z" fill="#d35230" /><rect y="9" width="18.500" height="18.500" rx="1.500" fill="#c43e1c" /><text x="4.500" y="23" fontSize="14" fontWeight="700" fill="#fff" fontFamily="Open Sans">P</text></svg>
)
const Secure = () => (
  <svg width="36" height="36" viewBox="0 0 36 36"><circle cx="18" cy="18" r="16.500" fill="#ffc928" /><path d="M4.500 9A16.500 16.500 0 0 1 34 22l-8-9-14-2z" fill="#6a3ff0" /><path d="M6 7C-1 15 2 29 14 34l3-7-7-9 0-9z" fill="#ff6a0a" /><path d="M18 8c4 2.500 6 2.500 9.500 2.500C29 19 26 25 18 28.500 10 25 7 19 8.500 10.500 12 10.500 14 10.500 18 8z" fill="#fff" /><circle cx="18" cy="16.500" r="2.500" fill="#2f3651" /><path d="M17 17h2v5.500h-2z" fill="#2f3651" /></svg>
)
const Folder = () => (
  <svg width="36" height="36" viewBox="0 0 36 36"><defs><linearGradient id="fo" x1="0" y1="0" x2="1" y2="1"><stop stopColor="#ffde6a" /><stop offset="1" stopColor="#fdbc13" /></linearGradient></defs><path d="M0 3.500A1.500 1.500 0 0 1 1.500 2H12l4 3.500L12 9H0z" fill="#dea303" /><path d="M0 8h12l3.500-2.800H36V34.500H0z" fill="url(#fo)" /><path d="M6 34.500V27a3 3 0 0 1 3-3h18a3 3 0 0 1 3 3v7.500z" fill="#0f80d4" /><path d="M11 29.500h14" stroke="#08529b" strokeWidth="1.600" strokeLinecap="round" /></svg>
)
const Terminal = () => (
  <svg width="36" height="36" viewBox="0 0 36 36"><path d="M0 6a2 2 0 0 1 2-2h10v6H0z" fill="#c9c9c9" /><path d="M12 4h12v6H12z" fill="#969696" /><path d="M24 4h10a2 2 0 0 1 2 2v4H24z" fill="#6a6a6a" /><path d="M0 9h36v20a2 2 0 0 1-2 2H2a2 2 0 0 1-2-2z" fill="#383838" /><path d="m6 13 7 6.500L6 26" stroke="#ccc" strokeWidth="3.500" fill="none" strokeLinejoin="round" /><path d="M17 25h12" stroke="#fff" strokeWidth="3.800" /></svg>
)
const apps: [ReactNode, 'dot' | 'active' | ''][] = [
  [<Start />, ''], [<SearchI />, ''], [<TaskView />, ''], [<Copilot />, ''], [<Edge />, ''], [<Store />, ''], [<Firefox />, ''], [<Opera />, ''], [<Photos />, ''], [<Chrome />, ''], [<Ppt />, ''],
  [<span className="relative"><FaWhatsapp size={40} color="#1b8b5a" className="-mx-0.5" /><span className="absolute -top-[5px] left-[12px] flex h-6 w-[39px] items-center justify-center rounded-[10px] bg-[#10893e] text-[16.500px] tracking-[-0.200px] text-white">99+</span></span>, ''],
  [<Secure />, ''], [<Folder />, 'dot'],
  [<span className="relative"><Chrome /><span className="absolute -top-[7px] left-[20px] flex size-6 items-center justify-center rounded-full bg-[#33691e] font-[Roboto] text-[13px] text-[#b8cdb0]">s</span></span>, 'active'],
  [<Terminal />, 'dot'],
]

const Sync = ({ x }: { x: number }) => (
  <g><circle cx={x} cy="14.500" r="6.500" fill="#fff" /><path d={`M${x - 4} 14a4 4 0 0 1 7-2.500M${x + 4} 15a4 4 0 0 1-7 2.500`} stroke="#0f6cbd" strokeWidth="1.600" fill="none" /><path d={`M${x + 4.5} 9.500v3.500h-3.500zM${x - 4.5} 19.500V16h3.500z`} fill="#0f6cbd" /></g>
)

function Taskbar() {
  return (
    <div className="relative flex h-[72px] items-center border-t-2 border-[#b3aeb7] bg-[linear-gradient(90deg,#dbd9e8_0%,#dcdae6_18%,#e4d7dd_27%,#dddae6_33%,#dddce7_38%,#e2dadf_43%,#dbdae8_52%,#e2dbe0_57%,#dcdbe6_62%,#dcdae8_100%)] pb-px">
      <svg width="36" height="36" viewBox="0 0 36 36" className="ml-[30px] shrink-0"><rect width="36" height="36" rx="1.500" fill="#0f6fc5" /><rect x="3" y="3.500" width="14" height="29" rx="1" fill="#fafafa" /><path d="M19 3.500h14v15H19z" fill="#66d9ff" /><path d="M19 18.500h14v14H19z" fill="#1ba4fb" /></svg>
      <div className="ml-[337px] flex gap-[10px]">
        {apps.map(([icon, st], i) => (
          <div key={i} className={`relative flex h-[57px] w-14 shrink-0 items-center justify-center rounded-md ${st === 'active' ? 'border border-[#d5d3df] bg-[#efedf4]' : ''}`}>
            {icon}
            {st === 'dot' && <span className="absolute bottom-0 h-[5px] w-[9px] rounded-full bg-[#808085]" />}
            {st === 'active' && <span className="absolute -bottom-px h-[5px] w-6 rounded-full bg-[#10893e]" />}
          </div>
        ))}
      </div>
      <svg width="17" height="10" viewBox="0 0 17 10" fill="none" stroke="#1c1c1c" strokeWidth="2" className="-mt-[2px] ml-[107px]"><path d="M1 9l7.500-7.500L16 9" /></svg>
      <svg width="25" height="22" viewBox="0 0 25 22" className="ml-[28px]"><path d="M5.500 16.500C-.5 16.500-.5 8.500 5 8 6.500-.5 17-.5 18.500 6.500c6 0 6.500 9.500 0 10z" fill="#929292" stroke="#1c1c1c" strokeWidth="1.500" /><path d="M2 12c3-5 8-3 11 0l-2 4H5c-2 0-3-2-3-4z" fill="#ddd" /><Sync x={17.500} /></svg>
      <svg width="25" height="22" viewBox="0 0 25 22" className="ml-[23px]"><path d="M5.500 17C-1 17-1 8.500 5 8 6.500-.5 17-.5 18.500 6.500c6 0 6.500 10 0 10.500z" fill="#0f78d4" /><path d="M10 3c4-3 8-1 8.500 3.500 3 0 5 2 5 5L12 8z" fill="#0b5cab" /><path d="M1 14c2-4 8-5 12-1v4H5.500C3 17 1.500 16 1 14z" fill="#28a8ea" /><Sync x={17.500} /></svg>
      <svg width="24" height="18" viewBox="0 0 24 18" fill="none" stroke="#1c1c1c" strokeWidth="1.700" strokeLinecap="round" className="-mt-[2px] ml-[23px]"><path d="M1 6.500c6-7 16-7 22 0M4.500 10c4.500-5 10.500-5 15 0M8 13c2.500-3 5.500-3 8 0" /><circle cx="12" cy="15.500" r="1.700" fill="#1c1c1c" stroke="none" /></svg>
      <svg width="25" height="20" viewBox="0 0 25 20" fill="none" stroke="#1c1c1c" strokeWidth="1.600" strokeLinecap="round" strokeLinejoin="round" className="-mt-px ml-[12px]"><path d="M1 6.500h4L10 2v16l-5-4.500H1zM13.500 7c1.500 1.500 1.500 4.500 0 6M16.800 4.500c3.500 3 3.500 8 0 11M20 1.500c5 5 5 12 0 17" /></svg>
      <svg width="25" height="21" viewBox="0 0 25 21" fill="none" className="-mt-[3px] ml-[11px]"><path d="M9 4.800h9a3 3 0 0 1 3 3v7.500a3 3 0 0 1-3 3H4a3 3 0 0 1-3-3V12" stroke="#1c1c1c" strokeWidth="1.700" /><path d="M8.500 7h9a1.500 1.500 0 0 1 1.500 1.500v6a1.500 1.500 0 0 1-1.500 1.500h-13A1.500 1.500 0 0 1 3 14.500V12l4-1zM22 8.500c1.500 0 2.500.5 2.500 1.500v3c0 1-1 1.500-2.500 1.500zM4.500 0 0 7h3l-1 5L7.500 5H4.500z" fill="#1c1c1c" /></svg>
      <div className="mr-[28px] mb-[3px] ml-auto text-right text-[17.500px] leading-[24px] tracking-[-0.050px] text-[#1c1c1c]"><div>7:28 PM</div><div>4/4/2025</div></div>
      <div className="absolute bottom-0 left-0 flex h-[28px] w-[141px] items-center rounded-t-md rounded-br-md bg-[#1d1d1d] pl-1">
        <svg width="17" height="17" viewBox="0 0 17 17"><circle cx="8.500" cy="8.500" r="7.700" fill="none" stroke="#e03030" strokeWidth="1.300" /><circle cx="8.500" cy="8.500" r="5.500" fill="#fe0000" /></svg>
        <span className="mb-[6px] ml-[8px] font-[Lato] text-[23.500px] leading-[26px] tracking-[-0.100px] whitespace-nowrap text-[#e8e8e8]">screen<span className="ml-[3px] font-bold tracking-[-0.700px]">rec</span></span>
      </div>
    </div>
  )
}

export default function App() {
  return (
    <div className="flex h-[1080px] w-[1920px] flex-col overflow-hidden font-['Open_Sans',sans-serif]">
      <TabStrip />
      <Toolbar />
      <Bookmarks />
      <Page />
      <Taskbar />
    </div>
  )
}
